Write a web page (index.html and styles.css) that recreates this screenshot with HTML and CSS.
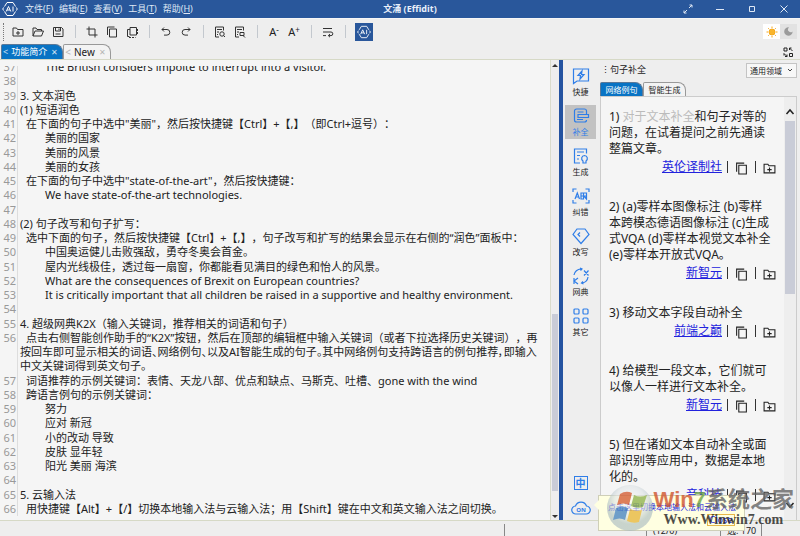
FILE: index.html
```html
<!DOCTYPE html>
<html lang="zh-CN">
<head>
<meta charset="utf-8">
<title>文涌 (Effidit)</title>
<link rel="stylesheet" href="styles.css">
</head>
<body>
<svg class="defs" aria-hidden="true">
  <symbol id="ai" viewBox="0 0 16 16"><path d="M2.500 5.500 5 1.500h6L13.500 5.500M13.500 10.500 11 14.500H5L2.500 10.500M1.500 6.500.8 8l.7 1.500M14.500 6.500l.7 1.500-.7 1.500"/><path d="M4.200 10.500 6.500 5.500l2.300 5M5 9h3M11 5.500v5"/></symbol>
  <symbol id="newdoc" viewBox="0 0 12 12"><path d="M1 10V2h3.500l1 1.500H11V10zM6 5v4M4 7h4"/></symbol>
  <symbol id="copy" viewBox="0 0 12 12"><path d="M3.500 3h7v8h-7zM1.500 9V1h7"/></symbol>
</svg>

<header class="titlebar">
  <svg class="logo" viewBox="0 0 16 16"><use href="#ai"/></svg>
  <nav class="menu">
    <button>文件(<u>F</u>)</button><button>编辑(<u>E</u>)</button><button>查看(<u>V</u>)</button><button>工具(<u>T</u>)</button><button>帮助(<u>H</u>)</button>
  </nav>
  <h1>文涌 (Effidit)</h1>
  <div class="window-buttons">
    <button aria-label="全屏"><svg viewBox="0 0 10 10"><path d="M6 4 9 1M6.500 1H9v2.500M4 6 1 9M1 6.500V9h2.500"/></svg></button>
    <button aria-label="最小化"><svg viewBox="0 0 10 10"><path d="M1 5.500h8"/></svg></button>
    <button aria-label="最大化"><svg viewBox="0 0 10 10"><path d="M2.500 2.500h5v5h-5z"/></svg></button>
    <button aria-label="关闭"><svg viewBox="0 0 10 10"><path d="m1.500 1.500 7 7m0-7-7 7"/></svg></button>
  </div>
</header>

<div class="toolbar">
  <span class="grip"></span>
  <button aria-label="新建"><svg viewBox="0 0 12 12"><use href="#newdoc"/></svg></button>
  <button aria-label="打开"><svg viewBox="0 0 12 12"><path d="M1 10V2h3l1 1.500h4.500V5M1 10l2-5h8.500L9.500 10z"/></svg></button>
  <button aria-label="保存"><svg viewBox="0 0 12 12"><path d="M1.500 1.500h8l1.500 1.500v7.500H1.500zM3.500 1.500V5h5V1.500M3.500 8h5M7 2.500v1.500"/></svg></button>
  <span class="sep"></span>
  <button aria-label="剪切"><svg viewBox="0 0 12 12"><path d="M3 .5V9h8.500M.5 3H9v8.500"/></svg></button>
  <button aria-label="复制"><svg viewBox="0 0 12 12"><use href="#copy"/></svg></button>
  <button aria-label="粘贴"><svg viewBox="0 0 12 12"><path d="M4 9V1.500h6.500V9zM4 3.500H1.500v7h2"/><path d="M3 11.500h6.500M11.500 3v6" stroke-dasharray="2 1"/></svg></button>
  <span class="sep"></span>
  <button aria-label="撤销"><svg viewBox="0 0 12 12"><path d="M4 1.500 2 3.500l2 2M2 3.500h5a2.800 2.800 0 0 1 0 5.600H4"/></svg></button>
  <button aria-label="重做"><svg viewBox="0 0 12 12"><path d="m8 1.500 2 2-2 2M10 3.500H5a2.800 2.800 0 0 0 0 5.600h3"/></svg></button>
  <span class="sep"></span>
  <button aria-label="查找"><svg viewBox="0 0 12 12"><path d="M5 11H1.500V1h8v3.500M3 3.500h5M3 6h2M3 8.500h1"/><circle cx="8" cy="8" r="2.200"/><path d="m9.500 9.500 1.500 1.500"/></svg></button>
  <button aria-label="替换"><svg viewBox="0 0 12 12"><path d="M5 11H1.500V1h8v3.500M3 3.500h5M3 6h2M3 8.500h1M6 6.500h4v3H6zM9 9.500l2 2"/></svg></button>
  <span class="sep"></span>
  <button class="letter" aria-label="缩小字号">A<sup>-</sup></button>
  <button class="letter" aria-label="放大字号">A<sup>+</sup></button>
  <span class="sep"></span>
  <button aria-label="自动换行"><svg viewBox="0 0 12 12"><path d="M1 2.500h9M1 6h8a1.800 1.800 0 0 1 0 3.600H6.500M1 9.600h3M8 8 6.300 9.600 8 11.200"/></svg></button>
  <span class="sep"></span>
  <button class="ai-button" aria-label="智能助手"><svg viewBox="0 0 16 16"><use href="#ai"/></svg></button>
  <div class="theme">
    <button class="sun" aria-label="浅色"><svg viewBox="0 0 12 12"><circle cx="6" cy="6" r="3"/><path d="M6 .5v1.500M6 10v1.500M.5 6H2M10 6h1.500M2.200 2.200l1 1M8.800 8.800l1 1M9.800 2.200l-1 1M3.200 8.800l-1 1"/></svg></button>
    <button class="moon" aria-label="深色"><svg viewBox="0 0 12 12"><path d="M6.500 1.500a3 3 0 1 0 4 4.500 4.600 4.600 0 1 1-4-4.500z"/></svg></button>
  </div>
</div>

<div class="tabrow">
  <button class="tab active"><i>&lt;</i>功能简介<b>✕</b></button>
  <button class="tab latin"><i>&lt;</i>New<b>✕</b></button>
  <button class="swap" aria-label="切换布局"><svg viewBox="0 0 12 12"><path d="M2 2h3v3H2zM7.500 7.500h3v3h-3zM7.500 2l3 3M7.500 4V2h2M2 7.500l3 3M2 9.500v-2M5 8.500v2H3"/></svg></button>
</div>

<main>
  <section class="editor">
    <div class="viewport">
      <ol class="lines" start="37">
        <li class="far">The British considers impolte to interrupt into a visitor.</li>
        <li></li>
        <li>3. 文本润色</li>
        <li>(1) 短语润色</li>
        <li class="near">在下面的句子中选中"美丽"，然后按快捷键【Ctrl】+【,】（即Ctrl+逗号）：</li>
        <li class="far">美丽的国家</li>
        <li class="far">美丽的风景</li>
        <li class="far">美丽的女孩</li>
        <li class="near">在下面的句子中选中"state-of-the-art"，然后按快捷键：</li>
        <li class="far">We have state-of-the-art technologies.</li>
        <li></li>
        <li>(2) 句子改写和句子扩写：</li>
        <li class="near">选中下面的句子，然后按快捷键【Ctrl】+【,】，句子改写和扩写的结果会显示在右侧的“润色”面板中：</li>
        <li class="far">中国奥运健儿击败强敌，勇夺冬奥会首金。</li>
        <li class="far">屋内光线极佳，透过每一扇窗，你都能看见满目的绿色和怡人的风景。</li>
        <li class="far">What are the consequences of Brexit on European countries?</li>
        <li class="far">It is critically important that all children be raised in a supportive and healthy environment.</li>
        <li></li>
        <li>4. 超级网典K2X（输入关键词，推荐相关的词语和句子）</li>
        <li class="para">点击右侧智能创作助手的“K2X”按钮，然后在顶部的编辑框中输入关键词（或者下拉选择历史关键词），再<br><span class="tight">按回车即可显示相关的词语、网络例句、以及AI智能生成的句子。其中网络例句支持跨语言的例句推荐，即输入</span><br>中文关键词得到英文句子。</li>
        <li class="near">词语推荐的示例关键词：表情、天龙八部、优点和缺点、马斯克、吐槽、gone with the wind</li>
        <li class="near">跨语言例句的示例关键词：</li>
        <li class="far">努力</li>
        <li class="far">应对 新冠</li>
        <li class="far">小的改动 导致</li>
        <li class="far">皮肤 显年轻</li>
        <li class="far">阳光 美丽 海滨</li>
        <li></li>
        <li>5. 云输入法</li>
        <li class="near">用快捷键【Alt】+【/】切换本地输入法与云输入法；用【Shift】键在中文和英文输入法之间切换。</li>
      </ol>
    </div>
    <div class="scroll"><span class="up"></span><span class="before"></span><span class="thumb"></span><span class="after"></span><span class="down"></span></div>
  </section>

  <nav class="rail">
    <button><svg viewBox="0 0 18 18"><path d="M1.500 2h15v12H5l-3.500 2.500zM10 4 6 8.500h2.500L8 12l4-4.500H9.500z"/></svg>快捷</button>
    <button class="on"><svg viewBox="0 0 18 18"><path d="M14.500 7V4a2 2 0 0 0-2-2h-8a2 2 0 0 0-2 2v9a2 2 0 0 0 2 2h8a2 2 0 0 0 2-2M5.500 5h6M5 12.500h6M6 7.500h10.500v3H6z"/></svg>补全</button>
    <button><svg viewBox="0 0 18 18"><path d="M8 16H2.500V2h12v4.500M5 5h7M5 8.500h3M5 12h2M12.500 8.500a3 3 0 0 1 1.500 5.500v2h-3v-2a3 3 0 0 1 1.500-5.500z"/></svg>生成</button>
    <button><svg viewBox="0 0 18 18"><path d="M1 5V2h3.500M13.500 2H17v3M1 13v3h3.500M13.500 16H17v-3M3 12l2.300-6 2.200 6M4 10h3M9 6v6h2.500V6zM9 9h5M12 6h2.500v6L12 9"/></svg>纠错</button>
    <button><svg viewBox="0 0 18 18"><path d="M5 2h8l4 5.500L9 16.500 1 7.500zM8 5.500 6 7.500l2 2"/></svg>改写</button>
    <button><svg viewBox="0 0 18 18"><path d="M2 8a7 7 0 0 1 7-6M8 1l2 1-1.500 1.500M16 10a7 7 0 0 1-6 6M11 14.500 9.500 16l2 1M12 3.500l4.500 5M16.500 3.500l-4.500 5M2 11v6M6 11l-4 3 4 3"/></svg>网典</button>
    <button><svg viewBox="0 0 18 18"><g><rect x="2" y="2" width="5" height="5" rx="1"/><rect x="11" y="2" width="5" height="5" rx="1"/><rect x="2" y="11" width="5" height="5" rx="1"/><rect x="11" y="11" width="5" height="5" rx="1"/></g></svg>其它</button>
    <div class="rail-bottom">
      <button class="zh"><span>中</span></button>
      <button class="cloud" aria-label="云输入法"><svg viewBox="0 0 20 16"><path d="M5 14a4 4 0 0 1-.5-8 5.800 5.800 0 0 1 11 0A4 4 0 0 1 15 14z"/><text x="10" y="12">ON</text></svg></button>
    </div>
  </nav>

  <aside class="panel">
    <div class="panel-head">
      <span class="dots">⋮</span><h2>句子补全</h2>
      <select aria-label="领域"><option>通用领域</option></select>
    </div>
    <div class="panel-tabs"><button class="tab active">网络例句</button><button class="tab">智能生成</button></div>
    <div class="results">
      <div class="cards">
        <article><p>1) <em>对于文本补全</em>和句子对等的<br>问题，在试着提问之前先通读<br>整篇文章。</p><footer><a href="#">英伦译制社</a><i></i><svg viewBox="0 0 12 12"><use href="#copy"/></svg><i></i><svg viewBox="0 0 12 12"><use href="#newdoc"/></svg></footer></article>
        <article><p>2) (a)零样本图像标注 (b)零样<br>本跨模态德语图像标注 (c)生成<br>式VQA (d)零样本视觉文本补全<br>(e)零样本开放式VQA。</p><footer><a href="#">新智元</a><i></i><svg viewBox="0 0 12 12"><use href="#copy"/></svg><i></i><svg viewBox="0 0 12 12"><use href="#newdoc"/></svg></footer></article>
        <article><p>3) 移动文本字段自动补全</p><footer><a href="#">前端之巅</a><i></i><svg viewBox="0 0 12 12"><use href="#copy"/></svg><i></i><svg viewBox="0 0 12 12"><use href="#newdoc"/></svg></footer></article>
        <article><p>4) 给模型一段文本，它们就可<br>以像人一样进行文本补全。</p><footer><a href="#">新智元</a><i></i><svg viewBox="0 0 12 12"><use href="#copy"/></svg><i></i><svg viewBox="0 0 12 12"><use href="#newdoc"/></svg></footer></article>
        <article><p>5) 但在诸如文本自动补全或面<br>部识别等应用中，数据是本地<br>化的。</p><footer><a href="#">音科技</a><i></i><svg viewBox="0 0 12 12"><use href="#copy"/></svg><i></i><svg viewBox="0 0 12 12"><use href="#newdoc"/></svg></footer></article>
      </div>
      <div class="panel-scroll">
        <svg viewBox="0 0 10 10"><path d="M1.500 7 5 3l3.500 4"/></svg>
        <span class="thumb"></span>
        <svg viewBox="0 0 10 10"><path d="M1.500 3 5 7l3.500-4"/></svg>
      </div>
    </div>
  </aside>
</main>

<footer class="status"><span></span><span>(12/0)</span><span>选: 170</span><span></span></footer>

<div class="tip"><p>点击这里切换本地输入法和云输入法</p><button>Close</button></div>
<div class="mark">
  <svg viewBox="0 0 48 48">
    <defs><radialGradient id="orb" cx="50%" cy="35%"><stop offset="0" stop-color="#fff"/><stop offset=".65" stop-color="#dfe4e6"/><stop offset="1" stop-color="#a5b8c0"/></radialGradient></defs>
    <circle cx="24" cy="24" r="23" fill="url(#orb)" fill-opacity=".75"/>
    <path fill="#d56038" d="M14 10q6-4 12-1l-3 12q-5-3-12 0z"/>
    <path fill="#91b452" d="M28 11q6 3 13 0l-4 12q-6 2-12-1z"/>
    <path fill="#4b87c4" d="M10 24q6-3 12 0l-3 12q-5-3-12 0z"/>
    <path fill="#e8b940" d="M24 25q6 3 12 1l-3 12q-6 2-12-1z"/>
  </svg>
  <div><strong><span>Win</span><b>7</b>系统之家</strong><small>Www.Winwin7.com</small></div>
</div>
</body>
</html>
```
FILE: styles.css
```css
* { box-sizing: border-box; }
body {
  margin: 0;
  height: 100vh;
  display: flex;
  flex-direction: column;
  overflow: hidden;
  background: #eee;
  color: #222;
  font: 9px/14px "Noto Sans", "Noto Sans CJK SC", sans-serif;
  text-spacing-trim: space-all;
}
button {
  border: 0;
  padding: 0;
  background: none;
  color: inherit;
  font: inherit;
  display: flex;
  align-items: center;
  justify-content: center;
}
svg { fill: none; stroke: currentColor; flex: none; }
h1, h2, p { margin: 0; font-size: 9px; }
.defs { display: none; }

.titlebar {
  display: grid;
  grid-template-columns: 20px 1fr auto 1fr;
  align-items: center;
  height: 18px;
  background: #29579b;
  color: #dfe8f5;
}
.logo { width: 16px; height: 16px; margin-left: 2px; stroke-width: 1; color: #fff; }
.menu { display: flex; gap: 6px; padding-left: 5px; }
.titlebar h1 { color: #e8effa; }
.window-buttons { display: flex; justify-content: flex-end; }
.window-buttons button { width: 32px; height: 18px; }
.window-buttons svg { width: 10px; height: 10px; }

.toolbar { display: flex; align-items: center; height: 26px; border-top: 1px solid #f6f6f6; }
.toolbar > button { width: 20px; height: 18px; }
.toolbar svg { width: 12px; height: 12px; color: #333; }
.grip { width: 2px; height: 18px; margin: 0 3px; border-left: 1px dotted #777; }
.sep { width: 14px; height: 13px; background: linear-gradient(#c3c8ce, #c3c8ce) center / 1px 100% no-repeat; }
.toolbar .letter { font-size: 11px; }
.letter sup { font-size: 8px; line-height: 8px; margin-bottom: 4px; }
.toolbar .ai-button { width: 18px; margin-left: 3px; background: #29579b; }
.toolbar .ai-button svg { width: 14px; height: 14px; color: #fff; }
.theme { display: flex; margin: 0 3px 0 auto; background: #e2e2e2; }
.theme button { width: 17px; height: 15px; }
.theme .sun { background: #fff; }
.theme .sun svg { color: #f5a81c; }
.sun circle { fill: #f9b52b; }
.theme .moon svg { fill: #9b9b9b; stroke: none; width: 11px; height: 11px; }

.tabrow { display: flex; height: 16px; padding-left: 1px; border-bottom: 1px solid #d6d9c6; }
.tab {
  height: 15px;
  border: 1px solid #999;
  border-bottom: 0;
  border-radius: 2px 8px 0 0;
  background: #f3f3f3;
}
.tab.active { background: #0873c4; border-color: #5a7898; color: #fff; }
.tabrow .tab { gap: 3px; padding: 0 4px 0 1px; }
.tab i { font-style: normal; opacity: .8; }
.tab b { font-weight: 400; opacity: .8; font-size: 8px; margin-left: 1px; }
.tabrow .latin { font-size: 10px; }
.latin i, .latin b { opacity: .3; }
.swap { margin: 0 6px 0 auto; }
.swap svg { width: 12px; height: 12px; }

main { flex: 1; min-height: 0; display: grid; grid-template-columns: 1fr 37px 200px; }
.editor { display: flex; min-width: 0; background: #f5f5f5; border-right: 4px solid #2453a0; }
.viewport { flex: 1; min-width: 0; overflow: hidden; margin: 6px 0 4px; }
.lines {
  list-style: none;
  counter-reset: row 36;
  display: grid;
  grid-auto-rows: 1fr;
  height: calc(100% + 6px);
  margin: -6px 0 0;
  padding: 0;
  font-size: 11px;
  white-space: nowrap;
}
.lines li { counter-increment: row; position: relative; min-height: 0; padding-left: 2px; margin-left: 17px; border-left: 1px solid #ddd; }
.lines li::before { content: counter(row); position: absolute; right: 100%; padding-right: 2px; color: #999; }
.lines .near { padding-left: 8px; }
.lines .far { padding-left: 27px; }
.lines .para { grid-row: span 3; text-indent: 6px; }
.lines .para::before { text-indent: 0; }
.tight { font-feature-settings: "palt"; }
.scroll { width: 9px; display: flex; flex-direction: column; border-left: 1px solid #dadccc; background: #eee; padding: 4px 1px 2px; }
.up, .down { border: 3px solid transparent; }
.up { border-bottom-color: #333; border-top: 0; }
.down { border-top-color: #333; border-bottom: 0; }
.before { flex: 245; }
.scroll .thumb { flex: 176; }
.after { flex: 24; }
.thumb { background: #c9ccd7; }

.rail { display: flex; flex-direction: column; align-items: center; gap: 6px; padding: 5px 4px 4px 2px; }
.rail button { width: 31px; height: 34px; flex-direction: column; font-size: 8px; line-height: 10px; gap: 2px; }
.rail svg { width: 18px; height: 18px; color: #2f7ee8; stroke-width: 1.2; }
.rail .on { background: #c2c2c2; color: #2f7ee8; }
.rail-bottom { margin-top: auto; display: flex; flex-direction: column; gap: 8px; }
.rail-bottom button { height: 17px; }
.zh span { border: 1px solid #2f7ee8; color: #2f7ee8; width: 14px; font-size: 10px; line-height: 12px; font-weight: 700; }
.cloud svg { width: 20px; height: 16px; }
.cloud text { font: 700 6px "Noto Sans", sans-serif; text-anchor: middle; fill: #2f7ee8; stroke: none; }

.panel { display: flex; flex-direction: column; min-width: 0; min-height: 0; padding: 2px 3px 0 0; }
.panel-head { display: flex; align-items: center; height: 16px; }
.dots { width: 10px; text-align: center; }
.panel-head h2 { font-weight: 400; }
.panel-head select {
  appearance: none;
  margin-left: auto;
  width: 51px;
  height: 15px;
  padding: 0 3px;
  border: 1px solid #c4c4c4;
  border-radius: 0;
  color: inherit;
  font: inherit;
  font-size: 8px;
  background: #f7f7f7 url("data:image/svg+xml,%3Csvg xmlns='http://www.w3.org/2000/svg' viewBox='0 0 6 6'%3E%3Cpath d='M1 2l2 2 2-2' fill='none' stroke='%23444'/%3E%3C/svg%3E") right 3px center / 6px 6px no-repeat;
}
.panel-tabs { display: flex; padding-top: 4px; }
.panel-tabs .tab { width: 43px; height: 14px; font-size: 8px; }
.results { flex: 1; min-height: 0; display: flex; background: #f5f5f5; border: 1px solid #ccc; border-bottom: 0; }
.cards { flex: 1; min-width: 0; overflow: hidden; padding: 12px 0 0 8px; font-size: 12px; line-height: 16px; white-space: nowrap; }
.cards article { margin-bottom: 23px; }
.cards p { font-size: 12px; }
.cards em { font-style: normal; color: #bbb; }
.cards footer { display: flex; align-items: center; justify-content: flex-end; gap: 7px; height: 19px; padding-right: 8px; }
.cards a { color: #22d; margin-right: -2px; }
.cards i { width: 1px; height: 12px; background: #333; }
.cards svg { width: 13px; height: 13px; margin-top: 3px; }
.panel-scroll { width: 12px; padding: 10px 1px 10px; display: flex; flex-direction: column; justify-content: space-between; background: #eee; }
.panel-scroll svg { width: 10px; height: 10px; stroke-width: 1.5; }
.panel-scroll .thumb { flex: 0 0 43%; margin: 4px 0 auto; }

.status { display: flex; justify-content: flex-end; height: 16px; border-top: 1px solid #d6d9c6; padding: 3px 38px 0 0; }
.status span { border-left: 1px solid #888; height: 12px; line-height: 14px; padding-left: 6px; }
.status span:nth-child(1) { width: 142px; }
.status span:nth-child(2) { width: 74px; }
.status span:nth-child(3) { width: 41px; }
.status span:nth-child(4) { width: 0; padding: 0; }

.tip {
  position: absolute;
  right: 55px;
  bottom: 5px;
  width: 147px;
  height: 36px;
  padding: 4px 9px 2px;
  background: #ffffe1;
  border: 1px solid #cfcfb8;
  color: #22d;
  font-size: 8px;
}
.tip::before { content: ""; position: absolute; left: -5px; top: 4px; border: 5px solid transparent; border-right-color: #ffffe1; border-left: 0; }
.tip p { font-size: 8px; white-space: nowrap; }
.tip button { width: 28px; height: 12px; margin-left: auto; border: 1px solid #e6b84a; font-size: 9px; }
.mark { position: absolute; right: 6px; bottom: 4px; display: flex; align-items: center; opacity: .8; pointer-events: none; }
.mark svg { width: 48px; height: 48px; stroke: none; }
.mark strong, .mark small { display: block; white-space: nowrap; }
.mark strong { font: 700 22px/24px "Liberation Sans", "Noto Sans CJK SC", sans-serif; color: #666; }
.mark strong span { color: #d0562f; }
.mark strong b { color: #6fa544; }
.mark small { font: 700 14px/16px "Liberation Serif", serif; color: #222; padding-left: 10px; }
```
